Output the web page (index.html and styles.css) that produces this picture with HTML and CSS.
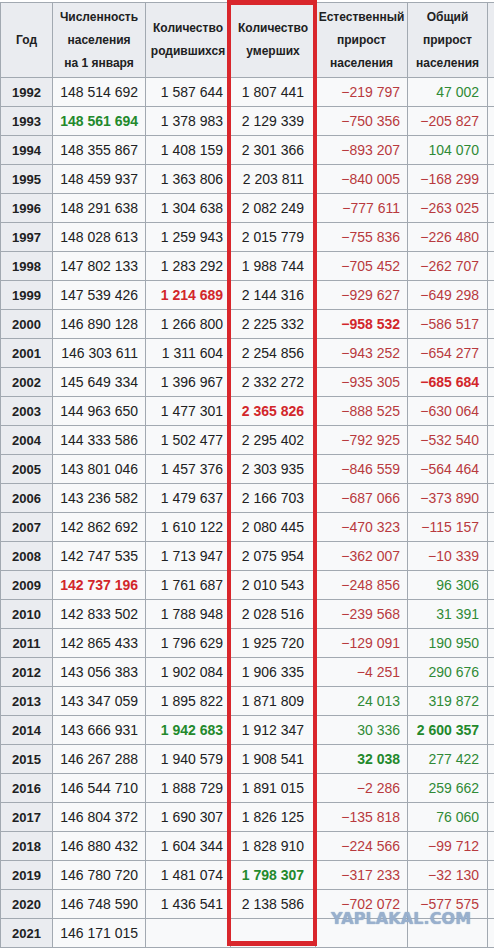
FILE: index.html
```html
<!DOCTYPE html>
<html lang="ru">
<head>
    <meta charset="UTF-8">
    <meta name="viewport" content="width=device-width, initial-scale=1.0">
    <title>Население России</title>
    <link rel="stylesheet" href="styles.css">
</head>
<body>
    <table class="stats">
        <colgroup>
            <col class="c-year">
            <col class="c-pop">
            <col class="c-born">
            <col class="c-dead">
            <col class="c-nat">
            <col class="c-total">
            <col class="c-more">
        </colgroup>
        <thead>
            <tr>
                <th>Год</th>
                <th>Численность населения на&nbsp;1&nbsp;января</th>
                <th>Количество родившихся</th>
                <th>Количество умерших</th>
                <th>Естественный прирост населения</th>
                <th>Общий прирост населения</th>
                <th></th>
            </tr>
        </thead>
        <tbody id="rows"></tbody>
    </table>

    <div class="frame"></div>
    <div class="watermark">YAPLAKAL.COM</div>

    <script>
        // год, численность, родившиеся, умершие, естественный, общий
        const data = [
            ['1992', '148 514 692', '1 587 644', '1 807 441', '−219 797', '47 002'],
            ['1993', '148 561 694*', '1 378 983', '2 129 339', '−750 356', '−205 827'],
            ['1994', '148 355 867', '1 408 159', '2 301 366', '−893 207', '104 070'],
            ['1995', '148 459 937', '1 363 806', '2 203 811', '−840 005', '−168 299'],
            ['1996', '148 291 638', '1 304 638', '2 082 249', '−777 611', '−263 025'],
            ['1997', '148 028 613', '1 259 943', '2 015 779', '−755 836', '−226 480'],
            ['1998', '147 802 133', '1 283 292', '1 988 744', '−705 452', '−262 707'],
            ['1999', '147 539 426', '1 214 689!', '2 144 316', '−929 627', '−649 298'],
            ['2000', '146 890 128', '1 266 800', '2 225 332', '−958 532!', '−586 517'],
            ['2001', '146 303 611', '1 311 604', '2 254 856', '−943 252', '−654 277'],
            ['2002', '145 649 334', '1 396 967', '2 332 272', '−935 305', '−685 684!'],
            ['2003', '144 963 650', '1 477 301', '2 365 826!', '−888 525', '−630 064'],
            ['2004', '144 333 586', '1 502 477', '2 295 402', '−792 925', '−532 540'],
            ['2005', '143 801 046', '1 457 376', '2 303 935', '−846 559', '−564 464'],
            ['2006', '143 236 582', '1 479 637', '2 166 703', '−687 066', '−373 890'],
            ['2007', '142 862 692', '1 610 122', '2 080 445', '−470 323', '−115 157'],
            ['2008', '142 747 535', '1 713 947', '2 075 954', '−362 007', '−10 339'],
            ['2009', '142 737 196!', '1 761 687', '2 010 543', '−248 856', '96 306'],
            ['2010', '142 833 502', '1 788 948', '2 028 516', '−239 568', '31 391'],
            ['2011', '142 865 433', '1 796 629', '1 925 720', '−129 091', '190 950'],
            ['2012', '143 056 383', '1 902 084', '1 906 335', '−4 251', '290 676'],
            ['2013', '143 347 059', '1 895 822', '1 871 809', '24 013', '319 872'],
            ['2014', '143 666 931', '1 942 683*', '1 912 347', '30 336', '2 600 357*'],
            ['2015', '146 267 288', '1 940 579', '1 908 541', '32 038*', '277 422'],
            ['2016', '146 544 710', '1 888 729', '1 891 015', '−2 286', '259 662'],
            ['2017', '146 804 372', '1 690 307', '1 826 125', '−135 818', '76 060'],
            ['2018', '146 880 432', '1 604 344', '1 828 910', '−224 566', '−99 712'],
            ['2019', '146 780 720', '1 481 074', '1 798 307*', '−317 233', '−32 130'],
            ['2020', '146 748 590', '1 436 541', '2 138 586', '−702 072', '−577 575'],
            ['2021', '146 171 015', '', '', '', '']
        ];

        const tbody = document.getElementById('rows');

        data.forEach(row => {
            const tr = document.createElement('tr');

            const th = document.createElement('th');
            th.innerText = row[0];
            tr.appendChild(th);

            row.slice(1).forEach((value, i) => {
                const td = document.createElement('td');
                let text = value;
                if (text.endsWith('!')) {
                    td.className = 'max';
                    text = text.slice(0, -1);
                } else if (text.endsWith('*')) {
                    td.className = 'min';
                    text = text.slice(0, -1);
                } else if (i >= 3 && text) {
                    // приросты: минус красным, плюс зелёным
                    td.className = text.startsWith('−') ? 'neg' : 'pos';
                }
                td.innerText = text;
                tr.appendChild(td);
            });

            tr.appendChild(document.createElement('td'));
            tbody.appendChild(tr);
        });
    </script>
</body>
</html>
```

FILE: styles.css
```css
body {
    margin: 0;
    padding-top: 2px;
    font-family: "Liberation Sans", Arial, sans-serif;
    color: #202122;
    background: #fff;
    overflow: hidden;
    position: relative;
}

.stats {
    border-collapse: collapse;
    table-layout: fixed;
    width: 547px;
    background: #f8f9fa;
}

.c-year { width: 52px; }
.c-pop { width: 93px; }
.c-born { width: 85px; }
.c-dead { width: 85px; }
.c-nat { width: 92px; }
.c-total { width: 80px; }
.c-more { width: 60px; }

.stats th,
.stats td {
    border: 1px solid #a2a9b1;
    padding: 0;
}

.stats th {
    background: #eaecf0;
    font-weight: bold;
    font-size: 13px;
    text-align: center;
}

.stats thead th {
    height: 74px;
    font-size: 12px;
    line-height: 23px;
    padding: 0 2px;
}

.stats tbody tr {
    height: 29px;
}

.stats td {
    font-size: 14px;
    text-align: right;
    padding-right: 7px;
    white-space: nowrap;
}

.stats td:nth-child(4) {
    padding-right: 11px;
}

.stats td:nth-child(6) {
    padding-right: 8px;
}

.neg {
    color: #b83a3e;
}

.pos {
    color: #2f8a36;
}

.max {
    color: #d2262a;
    font-weight: bold;
}

.min {
    color: #23892c;
    font-weight: bold;
}

.frame {
    position: absolute;
    left: 227px;
    top: 0;
    width: 82px;
    height: 936px;
    border: 4px solid #d9262c;
    border-top-width: 5px;
    border-bottom-width: 5px;
}

.watermark {
    position: absolute;
    left: 331px;
    top: 909px;
    font-family: "DejaVu Sans", sans-serif;
    font-weight: bold;
    font-size: 16px;
    letter-spacing: 0.1px;
    color: rgba(160, 182, 210, 0.85);
    text-shadow: 0 0 1px #6f8db3;
}
```
